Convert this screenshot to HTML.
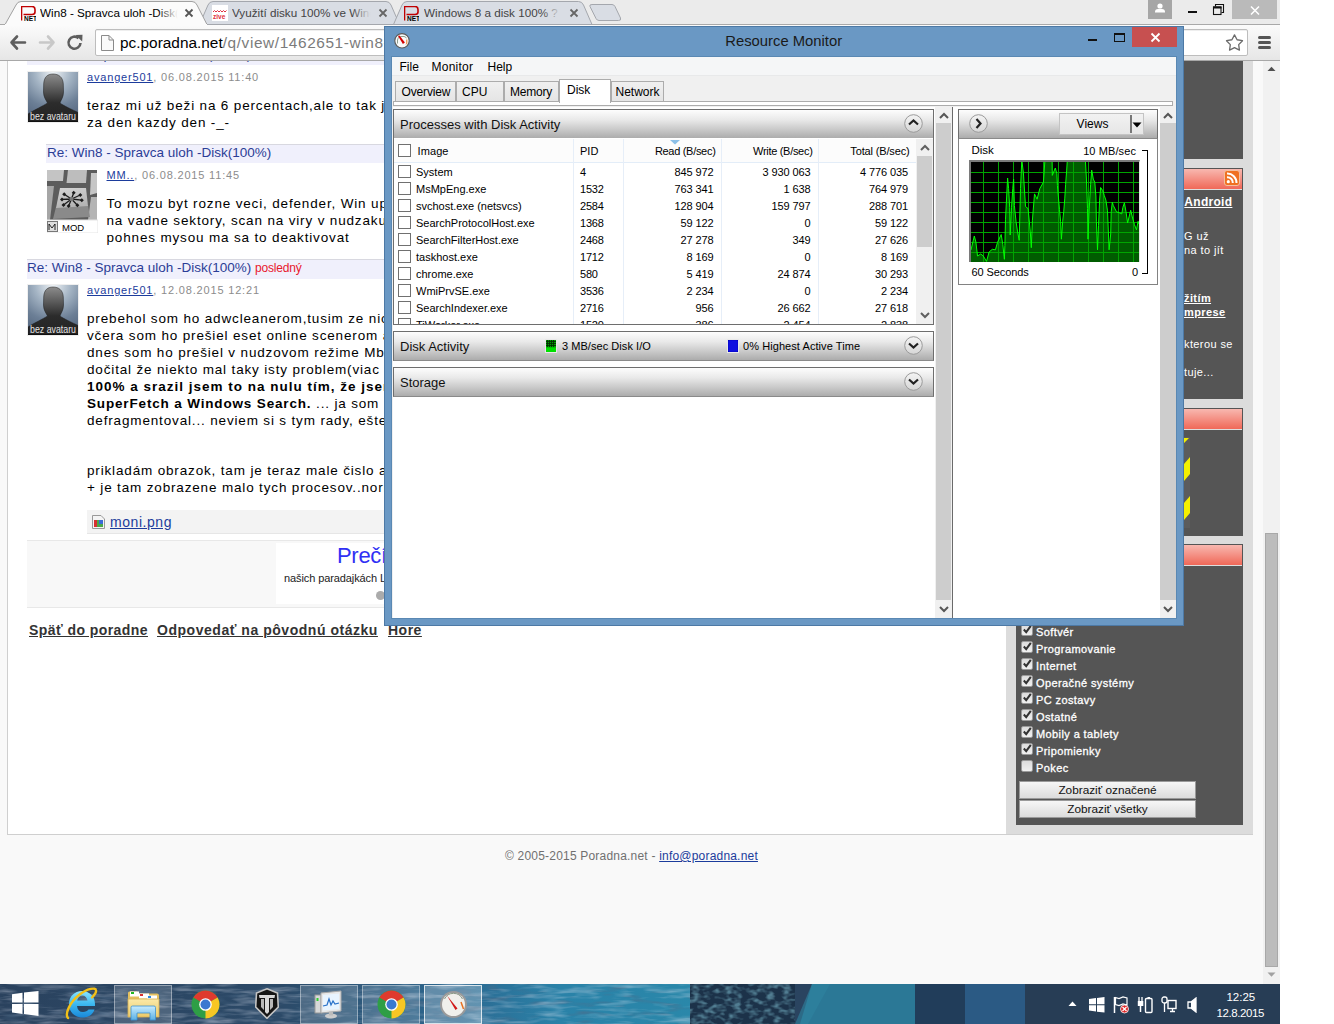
<!DOCTYPE html>
<html><head><meta charset="utf-8"><style>
html,body{margin:0;padding:0;background:#fff;}
body{width:1334px;height:1024px;position:relative;overflow:hidden;font-family:"Liberation Sans",sans-serif;}
div,svg{position:absolute;}
.t{position:absolute;}
.t{white-space:nowrap;line-height:1;}
a{color:inherit}
#scr{left:0;top:0;width:1280px;height:1024px;overflow:hidden;}
</style></head><body><div id="scr">
<div style="left:0px;top:0px;width:1280px;height:25px;background:#ebebeb"></div>
<svg style="position:absolute;left:0;top:0" width="1280" height="26">
<defs><linearGradient id="tg" x1="0" y1="0" x2="0" y2="1"><stop offset="0" stop-color="#fbfbfb"/><stop offset="1" stop-color="#fbfbfb"/></linearGradient></defs>
<line x1="0" y1="24.5" x2="1280" y2="24.5" stroke="#a9a9a9" stroke-width="1"/>
<path d="M399.5,24.5 L391,5 Q389.5,1.5 386,1.5 L213,1.5 Q209.5,1.5 208,5 L199.5,24.5 Z" fill="#d9dde4" stroke="#a4a7ad" stroke-width="1"/>
<path d="M592,24.5 L583.5,5 Q582,1.5 578.5,1.5 L407,1.5 Q403.5,1.5 402,5 L393.5,24.5 Z" fill="#d9dde4" stroke="#a4a7ad" stroke-width="1"/>
<path d="M207.5,25.5 L197,5 Q195.5,1.5 192,1.5 L21,1.5 Q17.5,1.5 16,5 L4.5,25.5 Z" fill="url(#tg)" stroke="#a0a0a0" stroke-width="1"/>
<rect x="5" y="24" width="202" height="2" fill="#fbfbfb"/>
<path d="M592,4.5 L612,4.5 Q614,4.5 615,6.5 L620.5,18 Q621.5,20.5 618.5,20.5 L599,20.5 Q597,20.5 596,18.5 L590,6.5 Q589,4.5 592,4.5 Z" fill="#d9dde4" stroke="#a4a7ad" stroke-width="1"/>
</svg>
<svg style="position:absolute;left:21px;top:6px" width="15" height="15" viewBox="0 0 15 15">
<path d="M0.5,14.5 V0.5 H11 Q14,0.5 14,3.5 V6 Q14,8.5 11,8.5 H2.5" fill="none" stroke="#c00000" stroke-width="1.6"/>
<text x="3" y="14.6" font-family="Liberation Sans" font-weight="bold" font-size="6.5" fill="#000">NET</text></svg>
<svg style="position:absolute;left:404px;top:6px" width="15" height="15" viewBox="0 0 15 15">
<path d="M0.5,14.5 V0.5 H11 Q14,0.5 14,3.5 V6 Q14,8.5 11,8.5 H2.5" fill="none" stroke="#c00000" stroke-width="1.6"/>
<text x="3" y="14.6" font-family="Liberation Sans" font-weight="bold" font-size="6.5" fill="#000">NET</text></svg>
<div style="left:212px;top:5px;width:16px;height:16px;background:#fff"></div>
<svg style="position:absolute;left:212px;top:5px" width="16" height="16">
<path d="M1,7 l1.5,-1.5 l1.5,1.5 l1.5,-1.5 l1.5,1.5 l1.5,-1.5 l1.5,1.5 l1.5,-1.5 l1.5,1.5 l1.5,-1.5" fill="none" stroke="#e03040" stroke-width="1"/>
<text x="1" y="14" font-family="Liberation Sans" font-weight="bold" font-size="6.5" fill="#e03040">zive</text></svg>
<div style="left:40px;top:0;width:140px;height:24px;overflow:hidden">
<span class="t" style="left:0px;top:7.10px;font-size:11.7px;color:#000;">Win8 - Spravca uloh -Disk(100%)</span>
<div style="left:118px;top:3px;width:22px;height:21px;background:linear-gradient(to right,rgba(251,251,251,0),#fbfbfb 90%)"></div>
</div>
<div style="left:232px;top:0;width:142px;height:24px;overflow:hidden">
<span class="t" style="left:0px;top:7.10px;font-size:11.7px;color:#444;">Využití disku 100% ve Windows 8</span>
<div style="left:120px;top:3px;width:22px;height:21px;background:linear-gradient(to right,rgba(217,221,228,0),#d9dde4 85%)"></div>
</div>
<div style="left:424px;top:0;width:140px;height:24px;overflow:hidden">
<span class="t" style="left:0px;top:7.10px;font-size:11.7px;color:#444;">Windows 8 a disk 100% ? | Poradna</span>
<div style="left:118px;top:3px;width:22px;height:21px;background:linear-gradient(to right,rgba(217,221,228,0),#d9dde4 85%)"></div>
</div>
<svg style="position:absolute;left:183.5px;top:8px" width="10" height="10"><path d="M1.5,1.5 L8.5,8.5 M8.5,1.5 L1.5,8.5" stroke="#555" stroke-width="1.8"/></svg>
<svg style="position:absolute;left:377.5px;top:8px" width="10" height="10"><path d="M1.5,1.5 L8.5,8.5 M8.5,1.5 L1.5,8.5" stroke="#666" stroke-width="1.8"/></svg>
<svg style="position:absolute;left:568.5px;top:8px" width="10" height="10"><path d="M1.5,1.5 L8.5,8.5 M8.5,1.5 L1.5,8.5" stroke="#666" stroke-width="1.8"/></svg>
<div style="left:1148px;top:0px;width:24px;height:19px;background:#a6a6a6"></div>
<svg style="position:absolute;left:1148px;top:0" width="24" height="19"><circle cx="12" cy="6" r="2.6" fill="#fff"/><path d="M7,12 Q7,9 10,9 H14 Q17,9 17,12 V12.5 H7 Z" fill="#fff"/></svg>
<div style="left:1188px;top:11px;width:9px;height:2px;background:#111"></div>
<svg style="position:absolute;left:1212px;top:3px" width="13" height="13"><rect x="1.5" y="4" width="7.5" height="7.5" fill="none" stroke="#111" stroke-width="1.1"/><rect x="1" y="3.5" width="8.5" height="2" fill="#111"/><path d="M3.5,3.5 V1.5 H11.5 V9.5 H9.5" fill="none" stroke="#111" stroke-width="1.1"/></svg>
<div style="left:1232px;top:0px;width:45px;height:19px;background:#bababa"></div>
<svg style="position:absolute;left:1250px;top:5.5px" width="10" height="9"><path d="M1,0.5 L9,8.5 M9,0.5 L1,8.5" stroke="#fff" stroke-width="1.5"/></svg>
<div style="left:0px;top:25px;width:1280px;height:35px;background:linear-gradient(#fbfbfb,#e6e6e6)"></div>
<div style="left:5px;top:25px;width:202px;height:1px;background:#fbfbfb"></div>
<div style="left:0px;top:60px;width:1280px;height:1px;background:#a8a8a8"></div>
<svg style="position:absolute;left:8px;top:33px" width="20" height="20"><path d="M9,3.5 L3.5,9.5 L9,15.5 M3.5,9.5 H17" fill="none" stroke="#5e5e5e" stroke-width="2.6" stroke-linecap="round" stroke-linejoin="round"/></svg>
<svg style="position:absolute;left:37px;top:33px" width="20" height="20"><path d="M11,3.5 L16.5,9.5 L11,15.5 M16.5,9.5 H3" fill="none" stroke="#c8c8c8" stroke-width="2.6" stroke-linecap="round" stroke-linejoin="round"/></svg>
<svg style="position:absolute;left:65px;top:33px" width="20" height="20"><path d="M15.5,10 A6,6 0 1 1 13.5,5.2" fill="none" stroke="#5e5e5e" stroke-width="2.6"/><path d="M10.5,2 L17.5,1.8 L17.2,8.5 Z" fill="#5e5e5e"/></svg>
<div style="left:95px;top:29px;width:1153px;height:27px;background:#fff;border:1px solid #bdbdbd;border-radius:2px;box-sizing:border-box;box-shadow:inset 0 1px 0 #eee"></div>
<svg style="position:absolute;left:101px;top:35px" width="13" height="16"><path d="M0.5,0.5 H8 L12.5,5 V15.5 H0.5 Z" fill="#fafafa" stroke="#8a8a8a"/><path d="M8,0.5 V5 H12.5" fill="none" stroke="#8a8a8a"/></svg>
<span class="t" style="left:120px;top:34.96px;font-size:15.4px;color:#000;">pc.poradna.net<span style="color:#7b7b7b;letter-spacing:0.6px">/q/view/1462651-win8-spravca-uloh-disk-100</span></span>
<svg style="position:absolute;left:1225px;top:33px" width="20" height="20"><path d="M9.50,1.90 L12.09,6.74 L17.49,7.70 L13.68,11.66 L14.44,17.10 L9.50,14.70 L4.56,17.10 L5.32,11.66 L1.51,7.70 L6.91,6.74 Z" fill="#fff" stroke="#6a6a6a" stroke-width="1.3" stroke-linejoin="round"/></svg>
<div style="left:1258px;top:36px;width:13px;height:3px;background:#555;border-radius:1.5px"></div>
<div style="left:1258px;top:41px;width:13px;height:3px;background:#555;border-radius:1.5px"></div>
<div style="left:1258px;top:46px;width:13px;height:3px;background:#555;border-radius:1.5px"></div>
<div style="left:0px;top:61px;width:1263px;height:923px;background:#f9f9f9"></div>
<div style="left:7px;top:61px;width:1px;height:774px;background:#cfcfcf"></div>
<div style="left:8px;top:61px;width:998px;height:773px;background:#fff"></div>
<div style="left:7px;top:834px;width:1246px;height:1px;background:#cfcfcf"></div>
<div style="left:1006px;top:61px;width:247px;height:773px;background:#dcdcdc"></div>
<div style="left:1016px;top:61px;width:227px;height:98px;background:#555"></div>
<div style="left:1016px;top:168px;width:227px;height:231px;background:#555"></div>
<div style="left:1016px;top:168px;width:227px;height:22px;background:#555"></div>
<div style="left:1017px;top:169px;width:225px;height:20px;background:linear-gradient(#f8b8b0,#f06858)"></div>
<div style="left:1017px;top:189px;width:225px;height:1px;background:#ddd"></div>
<div style="left:1016px;top:408px;width:227px;height:128px;background:#555"></div>
<div style="left:1016px;top:408px;width:227px;height:22px;background:#555"></div>
<div style="left:1017px;top:409px;width:225px;height:20px;background:linear-gradient(#f8b8b0,#f06858)"></div>
<div style="left:1017px;top:429px;width:225px;height:1px;background:#ddd"></div>
<div style="left:1016px;top:544px;width:227px;height:281px;background:#555"></div>
<div style="left:1016px;top:544px;width:227px;height:22px;background:#555"></div>
<div style="left:1017px;top:545px;width:225px;height:20px;background:linear-gradient(#f8b8b0,#f06858)"></div>
<div style="left:1017px;top:565px;width:225px;height:1px;background:#ddd"></div>
<svg style="position:absolute;left:1224px;top:170px" width="16" height="16"><rect x="0.5" y="0.5" width="15" height="15" rx="2.5" fill="#f07020" stroke="#f4c0a0"/>
<circle cx="4.3" cy="11.7" r="1.6" fill="#fff"/><path d="M3,7.2 A5.5,5.5 0 0 1 8.8,13 M3,3.5 A9.2,9.2 0 0 1 12.5,13" fill="none" stroke="#fff" stroke-width="2"/></svg>
<span class="t" style="left:1184.3px;top:195.84px;font-size:12px;color:#fff;font-weight:bold;letter-spacing:0.3px;text-decoration:underline"> Android</span>
<span class="t" style="left:1184px;top:231.19px;font-size:11px;color:#fff;letter-spacing:0.4px;">G už</span>
<span class="t" style="left:1184px;top:245.19px;font-size:11px;color:#fff;letter-spacing:0.4px;">na to jít</span>
<span class="t" style="left:1184px;top:292.69px;font-size:11px;color:#fff;font-weight:bold;letter-spacing:0.4px;text-decoration:underline">žitím</span>
<span class="t" style="left:1184px;top:306.69px;font-size:11px;color:#fff;font-weight:bold;letter-spacing:0.4px;text-decoration:underline">mprese</span>
<span class="t" style="left:1184px;top:339.19px;font-size:11px;color:#fff;letter-spacing:0.4px;">kterou se</span>
<span class="t" style="left:1184px;top:367.19px;font-size:11px;color:#fff;letter-spacing:0.4px;">tuje...</span>
<svg style="position:absolute;left:1184px;top:437px" width="6" height="91"><rect width="6" height="91" fill="#5c5c5c"/>
<path d="M0,1 H5 L0,6 Z M0,27 L6,20 V37 L0,44 Z M0,66 L6,59 V76 L0,83 Z" fill="#f4f000"/></svg>
<div style="left:1021px;top:624px;width:12px;height:12px;background:linear-gradient(#dcdcdc,#f0f0f0);border:1px solid #9a9a9a;border-radius:2px;box-sizing:border-box"></div>
<svg style="position:absolute;left:1021px;top:623px" width="12" height="12"><path d="M2.8,6.5 L5.2,9.2 L9.8,2.8" fill="none" stroke="#333" stroke-width="2"/></svg>
<span class="t" style="left:1036px;top:626.69px;font-size:11px;color:#fff;letter-spacing:0.4px;-webkit-text-stroke:0.3px #fff">Softvér</span>
<div style="left:1021px;top:641px;width:12px;height:12px;background:linear-gradient(#dcdcdc,#f0f0f0);border:1px solid #9a9a9a;border-radius:2px;box-sizing:border-box"></div>
<svg style="position:absolute;left:1021px;top:640px" width="12" height="12"><path d="M2.8,6.5 L5.2,9.2 L9.8,2.8" fill="none" stroke="#333" stroke-width="2"/></svg>
<span class="t" style="left:1036px;top:643.69px;font-size:11px;color:#fff;letter-spacing:0.4px;-webkit-text-stroke:0.3px #fff">Programovanie</span>
<div style="left:1021px;top:658px;width:12px;height:12px;background:linear-gradient(#dcdcdc,#f0f0f0);border:1px solid #9a9a9a;border-radius:2px;box-sizing:border-box"></div>
<svg style="position:absolute;left:1021px;top:657px" width="12" height="12"><path d="M2.8,6.5 L5.2,9.2 L9.8,2.8" fill="none" stroke="#333" stroke-width="2"/></svg>
<span class="t" style="left:1036px;top:660.69px;font-size:11px;color:#fff;letter-spacing:0.4px;-webkit-text-stroke:0.3px #fff">Internet</span>
<div style="left:1021px;top:675px;width:12px;height:12px;background:linear-gradient(#dcdcdc,#f0f0f0);border:1px solid #9a9a9a;border-radius:2px;box-sizing:border-box"></div>
<svg style="position:absolute;left:1021px;top:674px" width="12" height="12"><path d="M2.8,6.5 L5.2,9.2 L9.8,2.8" fill="none" stroke="#333" stroke-width="2"/></svg>
<span class="t" style="left:1036px;top:677.69px;font-size:11px;color:#fff;letter-spacing:0.4px;-webkit-text-stroke:0.3px #fff">Operačné systémy</span>
<div style="left:1021px;top:692px;width:12px;height:12px;background:linear-gradient(#dcdcdc,#f0f0f0);border:1px solid #9a9a9a;border-radius:2px;box-sizing:border-box"></div>
<svg style="position:absolute;left:1021px;top:691px" width="12" height="12"><path d="M2.8,6.5 L5.2,9.2 L9.8,2.8" fill="none" stroke="#333" stroke-width="2"/></svg>
<span class="t" style="left:1036px;top:694.69px;font-size:11px;color:#fff;letter-spacing:0.4px;-webkit-text-stroke:0.3px #fff">PC zostavy</span>
<div style="left:1021px;top:709px;width:12px;height:12px;background:linear-gradient(#dcdcdc,#f0f0f0);border:1px solid #9a9a9a;border-radius:2px;box-sizing:border-box"></div>
<svg style="position:absolute;left:1021px;top:708px" width="12" height="12"><path d="M2.8,6.5 L5.2,9.2 L9.8,2.8" fill="none" stroke="#333" stroke-width="2"/></svg>
<span class="t" style="left:1036px;top:711.69px;font-size:11px;color:#fff;letter-spacing:0.4px;-webkit-text-stroke:0.3px #fff">Ostatné</span>
<div style="left:1021px;top:726px;width:12px;height:12px;background:linear-gradient(#dcdcdc,#f0f0f0);border:1px solid #9a9a9a;border-radius:2px;box-sizing:border-box"></div>
<svg style="position:absolute;left:1021px;top:725px" width="12" height="12"><path d="M2.8,6.5 L5.2,9.2 L9.8,2.8" fill="none" stroke="#333" stroke-width="2"/></svg>
<span class="t" style="left:1036px;top:728.69px;font-size:11px;color:#fff;letter-spacing:0.4px;-webkit-text-stroke:0.3px #fff">Mobily a tablety</span>
<div style="left:1021px;top:743px;width:12px;height:12px;background:linear-gradient(#dcdcdc,#f0f0f0);border:1px solid #9a9a9a;border-radius:2px;box-sizing:border-box"></div>
<svg style="position:absolute;left:1021px;top:742px" width="12" height="12"><path d="M2.8,6.5 L5.2,9.2 L9.8,2.8" fill="none" stroke="#333" stroke-width="2"/></svg>
<span class="t" style="left:1036px;top:745.69px;font-size:11px;color:#fff;letter-spacing:0.4px;-webkit-text-stroke:0.3px #fff">Pripomienky</span>
<div style="left:1021px;top:760px;width:12px;height:12px;background:linear-gradient(#dcdcdc,#f0f0f0);border:1px solid #9a9a9a;border-radius:2px;box-sizing:border-box"></div>
<span class="t" style="left:1036px;top:762.69px;font-size:11px;color:#fff;letter-spacing:0.4px;-webkit-text-stroke:0.3px #fff">Pokec</span>
<div style="left:1019px;top:781px;width:177px;height:18px;background:linear-gradient(#f6f6f6,#dcdcdc);border:1px solid #9a9a9a;box-sizing:border-box"></div>
<span class="t" style="left:957.5px;top:784.51px;font-size:11.8px;color:#111;text-align:center;width:300px;">Zobraziť označené</span>
<div style="left:1019px;top:800px;width:177px;height:18px;background:linear-gradient(#f6f6f6,#dcdcdc);border:1px solid #9a9a9a;box-sizing:border-box"></div>
<span class="t" style="left:957.5px;top:803.51px;font-size:11.8px;color:#111;text-align:center;width:300px;">Zobraziť všetky</span>
<div style="left:1263px;top:61px;width:17px;height:923px;background:#f1f1f1"></div>
<div style="left:1265px;top:533px;width:13px;height:434px;background:#bcbcbc;border:1px solid #a8a8a8;box-sizing:border-box"></div>
<svg style="position:absolute;left:1267px;top:66px" width="9" height="6"><path d="M0.5,5 L4.5,0.8 L8.5,5 Z" fill="#505050"/></svg>
<svg style="position:absolute;left:1267px;top:972px" width="9" height="6"><path d="M0.5,0.5 L4.5,4.7 L8.5,0.5 Z" fill="#a0a0a0"/></svg>
<div style="left:8px;top:61px;width:998px;height:4px;overflow:hidden">
<div style="left:19px;top:-15px;width:979px;height:19px;background:#f0f0fc"></div>
<span class="t" style="left:19px;top:-13.43px;font-size:13.5px;color:#2b3d96;">Re: Win8 - Spravca uloh -Disk(100%)</span>
</div>
<div style="left:27px;top:71px;width:52px;height:52px;background:#efefef"></div>
<svg style="position:absolute;left:28px;top:72px" width="50" height="50" viewBox="0 0 50 50">
<defs><radialGradient id="ag2872" cx="0.5" cy="0.0" r="0.95"><stop offset="0" stop-color="#eef2f5"/><stop offset="0.38" stop-color="#a4b4c4"/><stop offset="0.75" stop-color="#6c7f96"/><stop offset="1" stop-color="#5a6c84"/></radialGradient>
<linearGradient id="hg2872" x1="0" y1="0" x2="0" y2="1"><stop offset="0" stop-color="#8c8c8c"/><stop offset="0.6" stop-color="#2c2c2c"/><stop offset="1" stop-color="#222"/></linearGradient></defs>
<rect width="50" height="50" fill="url(#ag2872)"/>
<path d="M25,2 C30.5,2 35,5 35.3,12 L35.5,20 C35.5,25 33,28 32,31 C36,34 44,37.5 50,40.5 V50 H0 V42 C6,38 15,34 19.5,31 C18,28 15.5,25 15.5,20 L15.7,12 C16,5 19.5,2 25,2 Z" fill="url(#hg2872)" stroke="#1a1a1a" stroke-width="0.5"/>
<rect y="49" width="50" height="1" fill="#111"/>
<text x="2" y="48" font-family="Liberation Sans" font-size="10" fill="#e4e4e4" textLength="46" lengthAdjust="spacingAndGlyphs">bez avataru</text></svg>
<span class="t" style="left:87px;top:71.69px;font-size:11px;color:#8c8c8c;letter-spacing:0.82px;"><a style="color:#1c3c9c;text-decoration:underline">avanger501</a>, <span style="color:#8c8c8c">06.08.2015 11:40</span></span>
<span class="t" style="left:87px;top:98.57px;font-size:13.5px;color:#000;letter-spacing:0.84px;">teraz mi už beži na 6 percentach,ale to tak je stale a zase sa to vrati</span>
<span class="t" style="left:87px;top:115.57px;font-size:13.5px;color:#000;letter-spacing:0.84px;">za den kazdy den -_-</span>
<div style="left:46px;top:144px;width:960px;height:1px;background:#d8d8e0"></div>
<div style="left:46px;top:145px;width:960px;height:18px;background:#f0f0fc"></div>
<span class="t" style="left:47px;top:146.07px;font-size:13.5px;color:#2b3d96;">Re: Win8 - Spravca uloh -Disk(100%)</span>
<svg style="position:absolute;left:47px;top:170px" width="51" height="63" viewBox="0 0 51 63">
<defs><linearGradient id="kf" x1="0" y1="0" x2="0.3" y2="1"><stop offset="0" stop-color="#d4d4d4"/><stop offset="1" stop-color="#b4b4b4"/></linearGradient></defs>
<rect x="0" y="0" width="50" height="50" fill="#5c5c5c"/>
<path d="M0,0 H17 L16,11 H0 Z" fill="#c4c4c4"/>
<path d="M21,0 H40 L39,13 H19.5 Z" fill="#bdbdbd"/>
<path d="M44,3 H50 V23 L43,25 Z" fill="#c6c6c6"/>
<path d="M0,16 H7 L3,50 H0 Z" fill="#a6a6a6"/>
<path d="M44,27 H50 V50 H41 Z" fill="#b4b4b4"/>
<path d="M9,37 L41,35 L43,47 L6,49 Z" fill="#8a8a8a"/>
<path d="M13,18 H39 L41,36 L9,38 Z" fill="url(#kf)"/>
<g stroke="#1c1c1c" stroke-width="1.3" fill="none"><path d="M24.5,29 L17.2,24.3 M24.5,29 L26.7,22.8 M24.5,29 L33.3,25 M24.5,29 L34.8,30.2 M24.5,29 L30.4,35.3 M24.5,29 L21.6,36 M24.5,29 L16.5,34.9 M24.5,29 L15,29.4"/></g>
<g fill="#1c1c1c"><path d="M17.2,22.3 l2,2 l-2,2 l-2,-2z M26.7,20.8 l2,2 l-2,2 l-2,-2z M33.3,23 l2,2 l-2,2 l-2,-2z M34.8,28.2 l2,2 l-2,2 l-2,-2z M30.4,33.3 l2,2 l-2,2 l-2,-2z M21.6,34 l2,2 l-2,2 l-2,-2z M16.5,32.9 l2,2 l-2,2 l-2,-2z M15,27.4 l2,2 l-2,2 l-2,-2z"/><circle cx="24.5" cy="29" r="2.2" fill="#777"/></g>
<rect x="0" y="50" width="51" height="13" fill="#fff" stroke="#e4e4e4"/>
<rect x="0.5" y="51.5" width="10" height="10" fill="#ddd" stroke="#777"/><path d="M2,60 V54 L5,58 L8,54 V60" fill="none" stroke="#111" stroke-width="0.9"/>
<text x="15" y="60.5" font-family="Liberation Sans" font-size="9.5" fill="#000">MOD</text></svg>
<span class="t" style="left:106.5px;top:169.69px;font-size:11px;color:#8c8c8c;letter-spacing:0.82px;"><a style="color:#1c3c9c;text-decoration:underline">MM..</a>, <span style="color:#8c8c8c">06.08.2015 11:45</span></span>
<span class="t" style="left:106.5px;top:196.57px;font-size:13.5px;color:#000;letter-spacing:0.84px;">To mozu byt rozne veci, defender, Win update, indexacia, kontrola disku</span>
<span class="t" style="left:106.5px;top:213.57px;font-size:13.5px;color:#000;letter-spacing:0.84px;">na vadne sektory, scan na viry v nudzakuoch ...</span>
<span class="t" style="left:106.5px;top:230.57px;font-size:13.5px;color:#000;letter-spacing:0.84px;">pohnes mysou ma sa to deaktivovat</span>
<div style="left:27px;top:259px;width:979px;height:1px;background:#d8d8e0"></div>
<div style="left:27px;top:260px;width:979px;height:19px;background:#f0f0fc"></div>
<span class="t" style="left:27px;top:261.07px;font-size:13.5px;color:#2b3d96;">Re: Win8 - Spravca uloh -Disk(100%) <span style="color:#e8182c;font-size:12px;letter-spacing:-0.2px">posledný</span></span>
<div style="left:27px;top:284px;width:52px;height:52px;background:#efefef"></div>
<svg style="position:absolute;left:28px;top:285px" width="50" height="50" viewBox="0 0 50 50">
<defs><radialGradient id="ag28285" cx="0.5" cy="0.0" r="0.95"><stop offset="0" stop-color="#eef2f5"/><stop offset="0.38" stop-color="#a4b4c4"/><stop offset="0.75" stop-color="#6c7f96"/><stop offset="1" stop-color="#5a6c84"/></radialGradient>
<linearGradient id="hg28285" x1="0" y1="0" x2="0" y2="1"><stop offset="0" stop-color="#8c8c8c"/><stop offset="0.6" stop-color="#2c2c2c"/><stop offset="1" stop-color="#222"/></linearGradient></defs>
<rect width="50" height="50" fill="url(#ag28285)"/>
<path d="M25,2 C30.5,2 35,5 35.3,12 L35.5,20 C35.5,25 33,28 32,31 C36,34 44,37.5 50,40.5 V50 H0 V42 C6,38 15,34 19.5,31 C18,28 15.5,25 15.5,20 L15.7,12 C16,5 19.5,2 25,2 Z" fill="url(#hg28285)" stroke="#1a1a1a" stroke-width="0.5"/>
<rect y="49" width="50" height="1" fill="#111"/>
<text x="2" y="48" font-family="Liberation Sans" font-size="10" fill="#e4e4e4" textLength="46" lengthAdjust="spacingAndGlyphs">bez avataru</text></svg>
<span class="t" style="left:87px;top:284.69px;font-size:11px;color:#8c8c8c;letter-spacing:0.82px;"><a style="color:#1c3c9c;text-decoration:underline">avanger501</a>, <span style="color:#8c8c8c">12.08.2015 12:21</span></span>
<span class="t" style="left:87px;top:311.57px;font-size:13.5px;color:#000;letter-spacing:0.84px;">prebehol som ho adwcleanerom,tusim ze nic nenaslo</span>
<span class="t" style="left:87px;top:328.57px;font-size:13.5px;color:#000;letter-spacing:0.84px;">včera som ho prešiel eset online scenerom a nic</span>
<span class="t" style="left:87px;top:345.57px;font-size:13.5px;color:#000;letter-spacing:0.84px;">dnes som ho prešiel v nudzovom režime Mbam, na jednom fore som sa</span>
<span class="t" style="left:87px;top:362.57px;font-size:13.5px;color:#000;letter-spacing:0.84px;">dočital že niekto mal taky isty problem(viac ako mesiac.. disk stale na</span>
<span class="t" style="left:87px;top:379.57px;font-size:13.5px;color:#000;letter-spacing:0.84px;"><b style="letter-spacing:1.0px">100% a srazil jsem to na nulu tím, že jsem vypnul dve sluzby</b></span>
<span class="t" style="left:87px;top:396.57px;font-size:13.5px;color:#000;letter-spacing:0.84px;"><b>SuperFetch a Windows Search.</b> ... ja som ich vypol ...</span>
<span class="t" style="left:87px;top:413.57px;font-size:13.5px;color:#000;letter-spacing:0.84px;">defragmentoval... neviem si s tym rady, ešte skusim ...</span>
<span class="t" style="left:87px;top:464.07px;font-size:13.5px;color:#000;letter-spacing:0.84px;">prikladám obrazok, tam je teraz male čislo a ...</span>
<span class="t" style="left:87px;top:481.07px;font-size:13.5px;color:#000;letter-spacing:0.84px;">+ je tam zobrazene malo tych procesov..normalne</span>
<div style="left:87px;top:510px;width:919px;height:24px;background:#f3f3f3;border-bottom:1px solid #e6e6e6;box-sizing:border-box"></div>
<svg style="position:absolute;left:92px;top:515px" width="13" height="14"><path d="M0.5,0.5 H9 L12.5,4 V13.5 H0.5 Z" fill="#f4f4f4" stroke="#999"/><rect x="2" y="5" width="9" height="7" fill="#4aa84a"/><path d="M2,5 h3 v7 h-3z" fill="#d83030"/><path d="M7,5 h4 v4 h-4z" fill="#3a6ad8"/></svg>
<span class="t" style="left:110px;top:514.65px;font-size:14px;color:#1c3c9c;letter-spacing:0.55px;"><a style="color:#1c3c9c;text-decoration:underline">moni.png</a></span>
<div style="left:27px;top:540px;width:979px;height:1px;background:#e8e8e8"></div>
<div style="left:27px;top:541px;width:979px;height:66px;background:#f8f8f8"></div>
<div style="left:27px;top:607px;width:979px;height:1px;background:#e8e8e8"></div>
<div style="left:276px;top:543px;width:500px;height:61px;background:#fff"></div>
<span class="t" style="left:337px;top:545.38px;font-size:22px;color:#3030f4;letter-spacing:-0.3px;">Prečítajte si</span>
<span class="t" style="left:284px;top:573.49px;font-size:11px;color:#222;letter-spacing:-0.1px;">našich paradajkách Lorem ipsum</span>
<div style="left:376px;top:591px;width:9px;height:9px;border-radius:50%;background:#ababab"></div>
<span class="t" style="left:29px;top:622.85px;font-size:14px;color:#333;font-weight:bold;letter-spacing:0.43px;"><u>Späť do poradne</u></span>
<span class="t" style="left:157px;top:622.85px;font-size:14px;color:#333;font-weight:bold;letter-spacing:0.53px;"><u>Odpovedať na pôvodnú otázku</u></span>
<span class="t" style="left:388px;top:622.85px;font-size:14px;color:#333;font-weight:bold;letter-spacing:0.5px;"><u>Hore</u></span>
<span class="t" style="left:505px;top:849.84px;font-size:12px;color:#707070;letter-spacing:0.2px;">© 2005-2015 Poradna.net - <a style="color:#1c3c9c;text-decoration:underline">info@poradna.net</a></span>
<div style="left:0;top:984px;width:1280px;height:40px;overflow:hidden;background:#2a4460">
<svg width="1280" height="40" style="position:absolute;left:0;top:0">
<defs>
<linearGradient id="tbg" x1="0" y1="0" x2="700" y2="0" gradientUnits="userSpaceOnUse">
<stop offset="0" stop-color="#2a425e"/><stop offset="0.4" stop-color="#2c4a68"/><stop offset="0.65" stop-color="#2c6890"/><stop offset="0.8" stop-color="#2a82a8"/><stop offset="1" stop-color="#2a88aa"/></linearGradient>
<filter id="wv" x="0" y="0" width="100%" height="100%">
<feTurbulence type="fractalNoise" baseFrequency="0.03 0.2" numOctaves="3" seed="7"/>
<feColorMatrix type="matrix" values="0 0 0 0 0.72  0 0 0 0 0.76  0 0 0 0 0.86  0 0 0 2.4 -1.1"/>
</filter>
<filter id="wd" x="0" y="0" width="100%" height="100%">
<feTurbulence type="fractalNoise" baseFrequency="0.035 0.18" numOctaves="2" seed="3"/>
<feColorMatrix type="matrix" values="0 0 0 0 0.08  0 0 0 0 0.15  0 0 0 0 0.25  0 0 0 -2.2 1.0"/>
</filter>
<filter id="fol" x="0" y="0" width="100%" height="100%">
<feTurbulence type="fractalNoise" baseFrequency="0.12 0.2" numOctaves="2" seed="11"/>
<feColorMatrix type="matrix" values="0 0 0 0 0.24  0 0 0 0 0.58  0 0 0 0 0.70  0 0 0 3 -1.3"/>
</filter>
</defs>
<rect width="700" height="40" fill="url(#tbg)"/>
<rect width="700" height="40" filter="url(#wd)" opacity="0.85"/>
<rect width="700" height="40" filter="url(#wv)" opacity="0.4"/>
<rect x="690" width="105" height="40" fill="#1c3249"/>
<rect x="690" width="105" height="40" filter="url(#fol)" opacity="0.5"/>
<path d="M800,40 L812,0 H915 V40 Z" fill="#2b7896"/>
<path d="M795,40 L812,0 H830 L808,40 Z" fill="#2f83a0" opacity="0.6"/>
<rect x="915" width="50" height="40" fill="#213d5a"/>
<rect x="965" width="60" height="40" fill="#2b5a84"/>
<rect x="1025" width="255" height="40" fill="#273d55"/>
</svg></div>
<svg style="position:absolute;left:12px;top:991px" width="27" height="25"><path d="M0,3.3 L10.5,1.8 V11.6 H0 Z M12,1.6 L26.5,0 V11.6 H12 Z M0,13 H10.5 V22.9 L0,21.5 Z M12,13 H26.5 V25 L12,23.1 Z" fill="#fff"/></svg>
<svg style="position:absolute;left:64px;top:987px" width="34" height="34" viewBox="0 0 34 34">
<defs><linearGradient id="ieg" x1="0" y1="0" x2="0" y2="1"><stop offset="0" stop-color="#8ae4ff"/><stop offset="0.5" stop-color="#3cb8f0"/><stop offset="1" stop-color="#1a88d8"/></linearGradient></defs>
<path d="M5,17 C5,9.5 10.5,4 18,4 C25.5,4 31,9.5 31,17 V19 H13 C13.5,23 15.5,25 19,25 C21.5,25 23.5,24 24.5,22.5 H30.5 C29,27.5 24.5,30.5 18.5,30.5 C10.5,30.5 5,25 5,17 Z M13.2,13.5 H23.5 C23,10.5 21,8.5 18.3,8.5 C15.6,8.5 13.8,10.5 13.2,13.5 Z" fill="url(#ieg)"/>
<path d="M4,31 C0.5,27 6,15 15,8 C24,1 31.5,0.5 32,3 C32.5,5 30.5,8 28,10.5" fill="none" stroke="#f2c018" stroke-width="2.4" stroke-linecap="round"/>
</svg>
<div style="left:114px;top:985px;width:58px;height:39px;background:rgba(255,255,255,0.16);border:1px solid rgba(255,255,255,0.4);box-sizing:border-box"></div>
<div style="left:300px;top:985px;width:58px;height:39px;background:rgba(255,255,255,0.16);border:1px solid rgba(255,255,255,0.4);box-sizing:border-box"></div>
<div style="left:362px;top:985px;width:58px;height:39px;background:rgba(255,255,255,0.16);border:1px solid rgba(255,255,255,0.4);box-sizing:border-box"></div>
<div style="left:424px;top:985px;width:58px;height:39px;background:rgba(255,255,255,0.26);border:1px solid rgba(255,255,255,0.75);box-sizing:border-box"></div>
<svg style="position:absolute;left:127px;top:990px" width="33" height="31" viewBox="0 0 33 31">
<defs><linearGradient id="fdg" x1="0" y1="0" x2="0" y2="1"><stop offset="0" stop-color="#fbe9a8"/><stop offset="1" stop-color="#eccb6a"/></linearGradient>
<linearGradient id="gl" x1="0" y1="0" x2="0" y2="1"><stop offset="0" stop-color="#c8ecff"/><stop offset="1" stop-color="#5ab0e4"/></linearGradient></defs>
<path d="M1,3 Q1,1.5 2.5,1.5 H10 L12,3.5 H30 Q32,3.5 32,5.5 V26 H1 Z" fill="#e4c060"/>
<rect x="3" y="1.5" width="9" height="5" fill="#fff"/><rect x="4" y="2" width="3" height="2" fill="#22b822"/>
<rect x="12" y="3.5" width="10" height="5" fill="#fff"/><rect x="13" y="4" width="3" height="2" fill="#d83030"/>
<rect x="20" y="5.5" width="10" height="5" fill="#fff"/><rect x="21" y="6" width="3" height="2" fill="#2a88e0"/>
<path d="M1,9 H32 V27 H1 Z" fill="url(#fdg)" stroke="#d8b050" stroke-width="0.8"/>
<path d="M4,30 V17.5 Q4,16 5.5,16 H27 Q28.5,16 28.5,17.5 V30 H23 V23 H10 V30 Z" fill="url(#gl)" stroke="#3a90d0" stroke-width="0.8"/>
</svg>
<svg style="position:absolute;left:191px;top:990px" width="29" height="29" viewBox="0 0 29 29">
<circle cx="14.5" cy="14.5" r="14" fill="#2e9e46"/>
<path d="M14.5,14.5 L2.4,7.5 A14,14 0 0 1 26.6,7.5 Z" fill="#df3a2e"/>
<path d="M14.5,14.5 L26.6,7.5 A14,14 0 0 1 14.5,28.5 Z" fill="#f7c624"/>
<circle cx="14.5" cy="14.5" r="6.3" fill="#fff"/><circle cx="14.5" cy="14.5" r="5" fill="#3a78d0"/></svg>
<svg style="position:absolute;left:377px;top:990px" width="29" height="29" viewBox="0 0 29 29">
<circle cx="14.5" cy="14.5" r="14" fill="#2e9e46"/>
<path d="M14.5,14.5 L2.4,7.5 A14,14 0 0 1 26.6,7.5 Z" fill="#df3a2e"/>
<path d="M14.5,14.5 L26.6,7.5 A14,14 0 0 1 14.5,28.5 Z" fill="#f7c624"/>
<circle cx="14.5" cy="14.5" r="6.3" fill="#fff"/><circle cx="14.5" cy="14.5" r="5" fill="#3a78d0"/></svg>
<svg style="position:absolute;left:255px;top:988px" width="24" height="31" viewBox="0 0 24 31">
<path d="M12,0.8 L22.5,5 L23.3,19 L12,30.3 L0.7,19 L1.5,5 Z" fill="#151515" stroke="#c4c4c4" stroke-width="1.6"/>
<path d="M4,7 H20 L19.5,10 H14 V24 L12,26 L10,24 V10 H4.5 Z" fill="#d8d8d8"/>
<path d="M6,11 V19 L9,22 V11 Z M18,11 V19 L15,22 V11 Z" fill="#b8b8b8"/></svg>
<svg style="position:absolute;left:314px;top:990px" width="30" height="30" viewBox="0 0 30 30">
<rect x="1" y="5" width="6" height="18" fill="#d8d8d8" stroke="#999"/><rect x="2.5" y="8" width="2" height="3" fill="#3c3"/>
<path d="M7,3 L27,1 V21 L7,23 Z" fill="#e8e8e8" stroke="#aaa"/><path d="M9,5 L25,3.5 V19 L9,20.5 Z" fill="#e8f4ff"/>
<path d="M9,16 L13,15 L15,9 L17,15 L19,11 L21,14 L25,13" fill="none" stroke="#2870c8" stroke-width="1.2"/>
<ellipse cx="17" cy="26" rx="6" ry="2.5" fill="#ccc"/><rect x="15" y="21.5" width="4" height="4" fill="#bbb"/></svg>
<svg style="position:absolute;left:439px;top:990px" width="29" height="29" viewBox="0 0 29 29">
<circle cx="14.5" cy="14.5" r="13.5" fill="#9a9a9a"/><circle cx="14.5" cy="14.5" r="11.5" fill="#f0f0ec"/>
<path d="M5.5,9 A10,10 0 0 1 23.5,9" fill="none" stroke="#8a9a8a" stroke-width="1"/>
<path d="M22,12 L24.5,19" stroke="#e87020" stroke-width="1.5"/>
<path d="M8,5.5 L18.5,18.5 L16.5,20 Z" fill="#d01818"/></svg>
<svg style="position:absolute;left:1068px;top:1001px" width="9" height="6"><path d="M0.5,5 L4.5,0.5 L8.5,5 Z" fill="#fff"/></svg>
<svg style="position:absolute;left:1089px;top:997px" width="16" height="16"><path d="M0,2 L7,1 V7.3 H0 Z M8,0.9 L15.5,0 V7.3 H8 Z M0,8.3 H7 V14.6 L0,13.6 Z M8,8.3 H15.5 V15.6 L8,14.7 Z" fill="#fff"/></svg>
<svg style="position:absolute;left:1113px;top:996px" width="17" height="18"><path d="M1.5,1 V17" stroke="#fff" stroke-width="1.5"/><path d="M2.5,1.5 L6,2.5 L10,1 L14,2 V9 L10,8 L6,9.5 L2.5,8.5 Z" fill="none" stroke="#fff" stroke-width="1.2"/><circle cx="11.5" cy="13" r="4" fill="#e02424" stroke="#fff" stroke-width="0.8"/><path d="M9.5,11 L13.5,15 M13.5,11 L9.5,15" stroke="#fff" stroke-width="1.2"/></svg>
<svg style="position:absolute;left:1137px;top:996px" width="16" height="18"><path d="M2,1 V5 M5,1 V5" stroke="#fff" stroke-width="1.3"/><rect x="0.8" y="5" width="5.5" height="5" fill="#fff"/><path d="M3.5,10 V16" stroke="#fff" stroke-width="1.5"/><rect x="8.5" y="2.5" width="6.5" height="14" rx="1" fill="none" stroke="#fff" stroke-width="1.4"/><rect x="10.5" y="1" width="2.5" height="1.5" fill="#fff"/></svg>
<svg style="position:absolute;left:1161px;top:996px" width="16" height="18"><rect x="1" y="1" width="5" height="6" rx="2" fill="none" stroke="#fff" stroke-width="1.3"/><path d="M3.5,7 V16" stroke="#fff" stroke-width="1.3"/><rect x="7" y="4.5" width="8" height="8" fill="none" stroke="#fff" stroke-width="1.4"/><path d="M9,15.5 H14 M11.5,12.5 V15.5" stroke="#fff" stroke-width="1.3"/></svg>
<svg style="position:absolute;left:1187px;top:997px" width="12" height="16"><path d="M1,5 H4 L9,1 V15 L4,11 H1 Z" fill="none" stroke="#fff" stroke-width="1.3"/><path d="M4,5 L9,1 V15 L4,11 Z" fill="#fff"/></svg>
<span class="t" style="left:1210.8px;top:991.77px;font-size:11.5px;color:#fff;text-align:center;width:60px;">12:25</span>
<span class="t" style="left:1200.3px;top:1007.77px;font-size:11.5px;color:#fff;letter-spacing:-0.4px;text-align:center;width:80px;">12.8.2015</span>
<div style="left:384px;top:26px;width:800px;height:600px;background:#6a98c4;border:1px solid #4d79a5;box-sizing:border-box"></div>
<svg style="position:absolute;left:394px;top:33px" width="16" height="16" viewBox="0 0 16 16">
<circle cx="8" cy="7.8" r="7.2" fill="#fafafa" stroke="#5a5a5a" stroke-width="1.1"/>
<path d="M3.5,10.5 V7 Q3.5,3.8 7,3.5 H10 Q12,3.6 12.3,5.3" fill="none" stroke="#90a090" stroke-width="1"/>
<path d="M12.8,6.5 V10.5 L11.8,11.2" fill="none" stroke="#f07a20" stroke-width="1"/>
<path d="M4,3.1 L5.5,2.4 L10.9,9.4 L8.9,11 Z" fill="#d40000"/></svg>
<span class="t" style="left:683.7px;top:34.47px;font-size:14.8px;color:#1a1a1a;text-align:center;width:200px;">Resource Monitor</span>
<div style="left:1088px;top:39px;width:9px;height:2px;background:#111"></div>
<div style="left:1114px;top:33px;width:11px;height:9px;border:1px solid #111;border-top-width:2px;box-sizing:border-box"></div>
<div style="left:1132px;top:27px;width:45px;height:20px;background:#c75050"></div>
<svg style="position:absolute;left:1150px;top:32px" width="11" height="11"><path d="M1.5,1.5 L9.5,9.5 M9.5,1.5 L1.5,9.5" stroke="#fff" stroke-width="1.8"/></svg>
<div style="left:391px;top:56px;width:786px;height:563px;background:#5a88b3"></div>
<div style="left:392px;top:57px;width:784px;height:561px;background:#f0f0f0"></div>
<div style="left:392px;top:57px;width:784px;height:18px;background:#f5f6f7"></div>
<div style="left:392px;top:75px;width:784px;height:1px;background:#e8e9ea"></div>
<span class="t" style="left:399.5px;top:60.84px;font-size:12px;color:#000;">File</span>
<span class="t" style="left:431.5px;top:60.84px;font-size:12px;color:#000;letter-spacing:0.25px;">Monitor</span>
<span class="t" style="left:487.5px;top:60.84px;font-size:12px;color:#000;">Help</span>
<div style="left:395px;top:81px;width:61px;height:21px;background:linear-gradient(#f0f0f0,#e4e4e4);border:1px solid #acacac;border-bottom:none;box-sizing:border-box"></div>
<div style="left:456px;top:81px;width:48px;height:21px;background:linear-gradient(#f0f0f0,#e4e4e4);border:1px solid #acacac;border-bottom:none;box-sizing:border-box"></div>
<div style="left:504px;top:81px;width:55px;height:21px;background:linear-gradient(#f0f0f0,#e4e4e4);border:1px solid #acacac;border-bottom:none;box-sizing:border-box"></div>
<div style="left:611px;top:81px;width:53px;height:21px;background:linear-gradient(#f0f0f0,#e4e4e4);border:1px solid #acacac;border-bottom:none;box-sizing:border-box"></div>
<span class="t" style="left:401.5px;top:86.34px;font-size:12px;color:#000;letter-spacing:-0.15px;">Overview</span>
<span class="t" style="left:462px;top:86.34px;font-size:12px;color:#000;">CPU</span>
<span class="t" style="left:510px;top:86.34px;font-size:12px;color:#000;letter-spacing:-0.2px;">Memory</span>
<span class="t" style="left:615.5px;top:86.34px;font-size:12px;color:#000;">Network</span>
<div style="left:393px;top:101px;width:780px;height:5px;background:#fff;border:1px solid #acacac;box-sizing:border-box"></div>
<div style="left:559px;top:79px;width:52px;height:24px;background:#fff;border:1px solid #acacac;border-bottom:none;box-sizing:border-box"></div>
<span class="t" style="left:567px;top:83.84px;font-size:12px;color:#000;">Disk</span>
<div style="left:393px;top:107px;width:542px;height:511px;background:#fff"></div>
<div style="left:393px;top:109px;width:541px;height:30px;background:linear-gradient(#fdfdfd 0%,#e9e9e9 35%,#c4c4c4 75%,#acacac 100%);border:1px solid #6e6e6e;border-bottom-color:#8a8a8a;box-sizing:border-box"></div>
<span class="t" style="left:400px;top:118.00px;font-size:13px;color:#111;">Processes with Disk Activity</span>
<svg style="position:absolute;left:904.0px;top:114.0px" width="19" height="19"><defs><linearGradient id="cg913.5123.5" x1="0" y1="0" x2="0" y2="1"><stop offset="0" stop-color="#f4f4f4"/><stop offset="1" stop-color="#d6d6d6"/></linearGradient></defs>
<circle cx="9.5" cy="9.5" r="8.8" fill="url(#cg913.5123.5)" stroke="#9a9a9a" stroke-width="1"/>
<path d="M5,10.5 L9.5,6.5 L14,10.5" fill="none" stroke="#222" stroke-width="2.2"/></svg>
<div style="left:393px;top:138px;width:541px;height:187px;background:#fff;border:1px solid #6e6e6e;border-top:none;box-sizing:border-box"></div>
<div style="left:394px;top:139px;width:522px;height:23px;background:#fcfcfc"></div>
<div style="left:394px;top:162px;width:522px;height:1px;background:#e3edf8"></div>
<div style="left:573px;top:139px;width:1px;height:185px;background:#e6eef8"></div>
<div style="left:623px;top:139px;width:1px;height:185px;background:#e6eef8"></div>
<div style="left:721px;top:139px;width:1px;height:185px;background:#e6eef8"></div>
<div style="left:818px;top:139px;width:1px;height:185px;background:#e6eef8"></div>
<div style="left:916px;top:139px;width:1px;height:185px;background:#e6eef8"></div>
<div style="left:398px;top:144px;width:13px;height:13px;background:#fff;border:1px solid #707070;box-sizing:border-box"></div>
<span class="t" style="left:417.5px;top:145.69px;font-size:11px;color:#000;letter-spacing:0.1px;">Image</span>
<span class="t" style="left:580px;top:145.69px;font-size:11px;color:#000;">PID</span>
<span class="t" style="left:515.5px;top:145.69px;font-size:11px;color:#000;letter-spacing:-0.3px;text-align:right;width:200px;">Read (B/sec)</span>
<span class="t" style="left:612.5px;top:145.69px;font-size:11px;color:#000;letter-spacing:-0.3px;text-align:right;width:200px;">Write (B/sec)</span>
<span class="t" style="left:709.5px;top:145.69px;font-size:11px;color:#000;letter-spacing:-0.15px;text-align:right;width:200px;">Total (B/sec)</span>
<svg style="position:absolute;left:670px;top:140px" width="11" height="5"><path d="M0,0 H10 L5,4.5 Z" fill="#8cc0e8"/></svg>
<div style="left:394px;top:163px;width:522px;height:161px;overflow:hidden">
<div style="left:4px;top:2px;width:13px;height:13px;background:#fff;border:1px solid #707070;box-sizing:border-box"></div>
<span class="t" style="left:22px;top:3.69px;font-size:11px;color:#000;">System</span>
<span class="t" style="left:186px;top:3.69px;font-size:11px;color:#000;letter-spacing:-0.2px;">4</span>
<span class="t" style="left:119.5px;top:3.69px;font-size:11px;color:#000;letter-spacing:-0.1px;text-align:right;width:200px;">845 972</span>
<span class="t" style="left:216.5px;top:3.69px;font-size:11px;color:#000;letter-spacing:-0.1px;text-align:right;width:200px;">3 930 063</span>
<span class="t" style="left:314px;top:3.69px;font-size:11px;color:#000;letter-spacing:-0.1px;text-align:right;width:200px;">4 776 035</span>
<div style="left:4px;top:19px;width:13px;height:13px;background:#fff;border:1px solid #707070;box-sizing:border-box"></div>
<span class="t" style="left:22px;top:20.69px;font-size:11px;color:#000;">MsMpEng.exe</span>
<span class="t" style="left:186px;top:20.69px;font-size:11px;color:#000;letter-spacing:-0.2px;">1532</span>
<span class="t" style="left:119.5px;top:20.69px;font-size:11px;color:#000;letter-spacing:-0.1px;text-align:right;width:200px;">763 341</span>
<span class="t" style="left:216.5px;top:20.69px;font-size:11px;color:#000;letter-spacing:-0.1px;text-align:right;width:200px;">1 638</span>
<span class="t" style="left:314px;top:20.69px;font-size:11px;color:#000;letter-spacing:-0.1px;text-align:right;width:200px;">764 979</span>
<div style="left:4px;top:36px;width:13px;height:13px;background:#fff;border:1px solid #707070;box-sizing:border-box"></div>
<span class="t" style="left:22px;top:37.69px;font-size:11px;color:#000;">svchost.exe (netsvcs)</span>
<span class="t" style="left:186px;top:37.69px;font-size:11px;color:#000;letter-spacing:-0.2px;">2584</span>
<span class="t" style="left:119.5px;top:37.69px;font-size:11px;color:#000;letter-spacing:-0.1px;text-align:right;width:200px;">128 904</span>
<span class="t" style="left:216.5px;top:37.69px;font-size:11px;color:#000;letter-spacing:-0.1px;text-align:right;width:200px;">159 797</span>
<span class="t" style="left:314px;top:37.69px;font-size:11px;color:#000;letter-spacing:-0.1px;text-align:right;width:200px;">288 701</span>
<div style="left:4px;top:53px;width:13px;height:13px;background:#fff;border:1px solid #707070;box-sizing:border-box"></div>
<span class="t" style="left:22px;top:54.69px;font-size:11px;color:#000;">SearchProtocolHost.exe</span>
<span class="t" style="left:186px;top:54.69px;font-size:11px;color:#000;letter-spacing:-0.2px;">1368</span>
<span class="t" style="left:119.5px;top:54.69px;font-size:11px;color:#000;letter-spacing:-0.1px;text-align:right;width:200px;">59 122</span>
<span class="t" style="left:216.5px;top:54.69px;font-size:11px;color:#000;letter-spacing:-0.1px;text-align:right;width:200px;">0</span>
<span class="t" style="left:314px;top:54.69px;font-size:11px;color:#000;letter-spacing:-0.1px;text-align:right;width:200px;">59 122</span>
<div style="left:4px;top:70px;width:13px;height:13px;background:#fff;border:1px solid #707070;box-sizing:border-box"></div>
<span class="t" style="left:22px;top:71.69px;font-size:11px;color:#000;">SearchFilterHost.exe</span>
<span class="t" style="left:186px;top:71.69px;font-size:11px;color:#000;letter-spacing:-0.2px;">2468</span>
<span class="t" style="left:119.5px;top:71.69px;font-size:11px;color:#000;letter-spacing:-0.1px;text-align:right;width:200px;">27 278</span>
<span class="t" style="left:216.5px;top:71.69px;font-size:11px;color:#000;letter-spacing:-0.1px;text-align:right;width:200px;">349</span>
<span class="t" style="left:314px;top:71.69px;font-size:11px;color:#000;letter-spacing:-0.1px;text-align:right;width:200px;">27 626</span>
<div style="left:4px;top:87px;width:13px;height:13px;background:#fff;border:1px solid #707070;box-sizing:border-box"></div>
<span class="t" style="left:22px;top:88.69px;font-size:11px;color:#000;">taskhost.exe</span>
<span class="t" style="left:186px;top:88.69px;font-size:11px;color:#000;letter-spacing:-0.2px;">1712</span>
<span class="t" style="left:119.5px;top:88.69px;font-size:11px;color:#000;letter-spacing:-0.1px;text-align:right;width:200px;">8 169</span>
<span class="t" style="left:216.5px;top:88.69px;font-size:11px;color:#000;letter-spacing:-0.1px;text-align:right;width:200px;">0</span>
<span class="t" style="left:314px;top:88.69px;font-size:11px;color:#000;letter-spacing:-0.1px;text-align:right;width:200px;">8 169</span>
<div style="left:4px;top:104px;width:13px;height:13px;background:#fff;border:1px solid #707070;box-sizing:border-box"></div>
<span class="t" style="left:22px;top:105.69px;font-size:11px;color:#000;">chrome.exe</span>
<span class="t" style="left:186px;top:105.69px;font-size:11px;color:#000;letter-spacing:-0.2px;">580</span>
<span class="t" style="left:119.5px;top:105.69px;font-size:11px;color:#000;letter-spacing:-0.1px;text-align:right;width:200px;">5 419</span>
<span class="t" style="left:216.5px;top:105.69px;font-size:11px;color:#000;letter-spacing:-0.1px;text-align:right;width:200px;">24 874</span>
<span class="t" style="left:314px;top:105.69px;font-size:11px;color:#000;letter-spacing:-0.1px;text-align:right;width:200px;">30 293</span>
<div style="left:4px;top:121px;width:13px;height:13px;background:#fff;border:1px solid #707070;box-sizing:border-box"></div>
<span class="t" style="left:22px;top:122.69px;font-size:11px;color:#000;">WmiPrvSE.exe</span>
<span class="t" style="left:186px;top:122.69px;font-size:11px;color:#000;letter-spacing:-0.2px;">3536</span>
<span class="t" style="left:119.5px;top:122.69px;font-size:11px;color:#000;letter-spacing:-0.1px;text-align:right;width:200px;">2 234</span>
<span class="t" style="left:216.5px;top:122.69px;font-size:11px;color:#000;letter-spacing:-0.1px;text-align:right;width:200px;">0</span>
<span class="t" style="left:314px;top:122.69px;font-size:11px;color:#000;letter-spacing:-0.1px;text-align:right;width:200px;">2 234</span>
<div style="left:4px;top:138px;width:13px;height:13px;background:#fff;border:1px solid #707070;box-sizing:border-box"></div>
<span class="t" style="left:22px;top:139.69px;font-size:11px;color:#000;">SearchIndexer.exe</span>
<span class="t" style="left:186px;top:139.69px;font-size:11px;color:#000;letter-spacing:-0.2px;">2716</span>
<span class="t" style="left:119.5px;top:139.69px;font-size:11px;color:#000;letter-spacing:-0.1px;text-align:right;width:200px;">956</span>
<span class="t" style="left:216.5px;top:139.69px;font-size:11px;color:#000;letter-spacing:-0.1px;text-align:right;width:200px;">26 662</span>
<span class="t" style="left:314px;top:139.69px;font-size:11px;color:#000;letter-spacing:-0.1px;text-align:right;width:200px;">27 618</span>
<div style="left:4px;top:155px;width:13px;height:13px;background:#fff;border:1px solid #707070;box-sizing:border-box"></div>
<span class="t" style="left:22px;top:156.69px;font-size:11px;color:#000;">TiWorker.exe</span>
<span class="t" style="left:186px;top:156.69px;font-size:11px;color:#000;letter-spacing:-0.2px;">1520</span>
<span class="t" style="left:119.5px;top:156.69px;font-size:11px;color:#000;letter-spacing:-0.1px;text-align:right;width:200px;">386</span>
<span class="t" style="left:216.5px;top:156.69px;font-size:11px;color:#000;letter-spacing:-0.1px;text-align:right;width:200px;">2 454</span>
<span class="t" style="left:314px;top:156.69px;font-size:11px;color:#000;letter-spacing:-0.1px;text-align:right;width:200px;">2 838</span>
</div>
<div style="left:916px;top:139px;width:17px;height:185px;background:#f0f0f0"></div>
<div style="left:917px;top:156px;width:15px;height:91px;background:#cdcdcd"></div>
<svg style="position:absolute;left:919.5px;top:144px" width="10" height="8"><path d="M1,6 L5,2 L9,6" fill="none" stroke="#606060" stroke-width="2"/></svg>
<svg style="position:absolute;left:919.5px;top:311px" width="10" height="8"><path d="M1,2 L5,6 L9,2" fill="none" stroke="#606060" stroke-width="2"/></svg>
<div style="left:393px;top:331px;width:541px;height:30px;background:linear-gradient(#fdfdfd 0%,#e9e9e9 35%,#c4c4c4 75%,#acacac 100%);border:1px solid #6e6e6e;border-bottom-color:#8a8a8a;box-sizing:border-box"></div>
<span class="t" style="left:400px;top:340.00px;font-size:13px;color:#111;">Disk Activity</span>
<svg style="position:absolute;left:545px;top:339px" width="12" height="14"><rect x="0.5" y="0.5" width="11" height="13" fill="#00e000" stroke="#e8e8e8"/><rect x="1" y="1" width="10" height="7.5" fill="#00a000"/>
<path d="M1,2.5 H11 M1,4.5 H11 M1,6.5 H11 M2.5,1 V8 M4.5,1 V8 M6.5,1 V8 M8.5,1 V8" stroke="#003000" stroke-width="0.9"/></svg>
<span class="t" style="left:562px;top:341.19px;font-size:11px;color:#000;letter-spacing:0.05px;">3 MB/sec Disk I/O</span>
<svg style="position:absolute;left:727px;top:339px" width="12" height="14"><rect x="0.5" y="0.5" width="11" height="13" fill="#0000c0" stroke="#e8e8e8"/>
<path d="M1,3 H11 M1,5 H11 M1,7 H11 M1,9 H11 M1,11 H11 M3,1 V13 M5,1 V13 M7,1 V13 M9,1 V13" stroke="#2020ff" stroke-width="0.6"/></svg>
<span class="t" style="left:743px;top:341.19px;font-size:11px;color:#000;letter-spacing:0.07px;">0% Highest Active Time</span>
<svg style="position:absolute;left:904.0px;top:336.0px" width="19" height="19"><defs><linearGradient id="cg913.5345.5" x1="0" y1="0" x2="0" y2="1"><stop offset="0" stop-color="#f4f4f4"/><stop offset="1" stop-color="#d6d6d6"/></linearGradient></defs>
<circle cx="9.5" cy="9.5" r="8.8" fill="url(#cg913.5345.5)" stroke="#9a9a9a" stroke-width="1"/>
<path d="M5,7.5 L9.5,11.5 L14,7.5" fill="none" stroke="#222" stroke-width="2.2"/></svg>
<div style="left:393px;top:367px;width:541px;height:30px;background:linear-gradient(#fdfdfd 0%,#e9e9e9 35%,#c4c4c4 75%,#acacac 100%);border:1px solid #6e6e6e;border-bottom-color:#8a8a8a;box-sizing:border-box"></div>
<span class="t" style="left:400px;top:376.00px;font-size:13px;color:#111;">Storage</span>
<svg style="position:absolute;left:904.0px;top:372.0px" width="19" height="19"><defs><linearGradient id="cg913.5381.5" x1="0" y1="0" x2="0" y2="1"><stop offset="0" stop-color="#f4f4f4"/><stop offset="1" stop-color="#d6d6d6"/></linearGradient></defs>
<circle cx="9.5" cy="9.5" r="8.8" fill="url(#cg913.5381.5)" stroke="#9a9a9a" stroke-width="1"/>
<path d="M5,7.5 L9.5,11.5 L14,7.5" fill="none" stroke="#222" stroke-width="2.2"/></svg>
<div style="left:936px;top:107px;width:15px;height:511px;background:#cdcdcd"></div>
<div style="left:936px;top:107px;width:15px;height:16px;background:#f0f0f0"></div>
<div style="left:936px;top:600px;width:15px;height:18px;background:#f0f0f0"></div>
<svg style="position:absolute;left:938.5px;top:112px" width="10" height="8"><path d="M1,6 L5,2 L9,6" fill="none" stroke="#555" stroke-width="2"/></svg>
<svg style="position:absolute;left:938.5px;top:605px" width="10" height="8"><path d="M1,2 L5,6 L9,2" fill="none" stroke="#555" stroke-width="2"/></svg>
<div style="left:952px;top:107px;width:1px;height:511px;background:#6a6a6a"></div>
<div style="left:953px;top:107px;width:207px;height:511px;background:#fff"></div>
<div style="left:958px;top:109px;width:200px;height:176px;background:#fff;border:1px solid #828282;box-sizing:border-box"></div>
<div style="left:958px;top:109px;width:200px;height:30px;background:linear-gradient(#fdfdfd 0%,#e9e9e9 35%,#c4c4c4 75%,#acacac 100%);border:1px solid #6e6e6e;border-bottom-color:#8a8a8a;box-sizing:border-box"></div>
<svg style="position:absolute;left:969.0px;top:114.0px" width="19" height="19"><defs><linearGradient id="cg978.5123.5" x1="0" y1="0" x2="0" y2="1"><stop offset="0" stop-color="#f4f4f4"/><stop offset="1" stop-color="#d6d6d6"/></linearGradient></defs>
<circle cx="9.5" cy="9.5" r="8.8" fill="url(#cg978.5123.5)" stroke="#9a9a9a" stroke-width="1"/>
<path d="M7.5,5 L11.5,9.5 L7.5,14" fill="none" stroke="#222" stroke-width="2.2"/></svg>
<div style="left:1059px;top:113px;width:85px;height:22px;background:linear-gradient(#f2f2f2,#e6e6e6);border:1px solid #c4c4c4;box-sizing:border-box"></div>
<span class="t" style="left:1062.5px;top:117.64px;font-size:12px;color:#000;text-align:center;width:60px;">Views</span>
<div style="left:1130px;top:115px;width:2px;height:18px;background:#777"></div>
<svg style="position:absolute;left:1132px;top:122px" width="10" height="6"><path d="M0.5,0.5 H9.5 L5,5.5 Z" fill="#000"/></svg>
<span class="t" style="left:971.5px;top:145.27px;font-size:11.5px;color:#000;">Disk</span>
<span class="t" style="left:936px;top:145.69px;font-size:11px;color:#000;letter-spacing:0.1px;text-align:right;width:200px;">10 MB/sec</span>
<span class="t" style="left:971.5px;top:266.69px;font-size:11px;color:#000;letter-spacing:-0.1px;">60 Seconds</span>
<span class="t" style="left:938px;top:266.69px;font-size:11px;color:#000;text-align:right;width:200px;">0</span>
<div style="left:1147px;top:150px;width:1px;height:124px;background:#000"></div>
<div style="left:1142px;top:150px;width:5px;height:1px;background:#000"></div>
<div style="left:1142px;top:273px;width:5px;height:1px;background:#000"></div>
<div style="left:969px;top:160px;width:171px;height:102px;background:#000;border-top:2px solid #7a7a7a;border-left:2px solid #7a7a7a;border-right:1px solid #e0e0e0;box-sizing:border-box"></div>
<svg style="position:absolute;left:971px;top:162px" width="168" height="100" viewBox="0 0 168 100">
<rect width="168" height="100" fill="#000"/>
<polygon points="0,100 0.0,88.0 3.3,74.0 4.9,80.0 6.5,94.0 9.7,92.0 12.3,94.0 15.5,99.4 18.1,90.0 21.3,87.3 24.4,87.8 26.5,80.4 30.2,72.5 31.8,82.5 33.4,97.3 33.9,83.6 34.5,57.2 36.6,16.0 37.6,26.6 38.7,45.6 39.2,73.0 40.5,45.6 41.8,26.6 42.6,17.1 43.4,43.5 45.0,59.3 46.6,69.9 48.2,78.3 49.5,26.6 50.8,-2.0 52.4,10.8 54.5,44.5 57.1,46.6 59.3,69.9 60.3,85.7 61.4,58.3 63.5,31.9 66.1,37.2 68.8,26.6 72.4,20.3 74.0,-3.0 81.1,-3.0 81.3,13.4 84.3,6.0 85.9,11.8 86.4,23.4 87.4,35.0 88.5,47.7 89.6,59.3 90.4,77.2 91.7,59.3 92.7,49.8 93.8,36.1 94.6,22.4 95.7,8.1 96.4,-3.0 114.3,-3.0 115.4,16.0 116.5,46.6 117.0,77.2 118.0,50.9 119.6,22.4 120.7,8.1 122.3,17.1 123.8,20.3 124.9,34.0 125.4,59.3 126.5,87.8 127.5,63.5 128.6,38.2 129.6,25.5 131.8,28.7 133.3,33.5 134.9,38.2 136.5,48.8 138.1,87.8 139.7,72.0 140.2,49.8 141.3,40.3 142.3,43.5 145.5,49.8 148.6,50.9 150.8,51.9 151.8,45.6 153.4,40.8 155.0,49.8 156.6,60.9 159.7,48.2 161.3,55.0 163.4,62.5 165.5,67.8 167.1,59.3 168.0,62.0 168,100" fill="#005c00"/>
<path d="M12.5,0 V100 M27.5,0 V100 M42.5,0 V100 M57.5,0 V100 M72.5,0 V100 M87.5,0 V100 M102.5,0 V100 M117.5,0 V100 M132.5,0 V100 M147.5,0 V100 M162.5,0 V100 M0,10.5 H168 M0,20.5 H168 M0,30.5 H168 M0,40.5 H168 M0,50.5 H168 M0,60.5 H168 M0,70.5 H168 M0,80.5 H168 M0,90.5 H168" stroke="#00a400" stroke-width="1" fill="none"/>
<polyline points="0.0,88.0 3.3,74.0 4.9,80.0 6.5,94.0 9.7,92.0 12.3,94.0 15.5,99.4 18.1,90.0 21.3,87.3 24.4,87.8 26.5,80.4 30.2,72.5 31.8,82.5 33.4,97.3 33.9,83.6 34.5,57.2 36.6,16.0 37.6,26.6 38.7,45.6 39.2,73.0 40.5,45.6 41.8,26.6 42.6,17.1 43.4,43.5 45.0,59.3 46.6,69.9 48.2,78.3 49.5,26.6 50.8,-2.0 52.4,10.8 54.5,44.5 57.1,46.6 59.3,69.9 60.3,85.7 61.4,58.3 63.5,31.9 66.1,37.2 68.8,26.6 72.4,20.3 74.0,-3.0 81.1,-3.0 81.3,13.4 84.3,6.0 85.9,11.8 86.4,23.4 87.4,35.0 88.5,47.7 89.6,59.3 90.4,77.2 91.7,59.3 92.7,49.8 93.8,36.1 94.6,22.4 95.7,8.1 96.4,-3.0 114.3,-3.0 115.4,16.0 116.5,46.6 117.0,77.2 118.0,50.9 119.6,22.4 120.7,8.1 122.3,17.1 123.8,20.3 124.9,34.0 125.4,59.3 126.5,87.8 127.5,63.5 128.6,38.2 129.6,25.5 131.8,28.7 133.3,33.5 134.9,38.2 136.5,48.8 138.1,87.8 139.7,72.0 140.2,49.8 141.3,40.3 142.3,43.5 145.5,49.8 148.6,50.9 150.8,51.9 151.8,45.6 153.4,40.8 155.0,49.8 156.6,60.9 159.7,48.2 161.3,55.0 163.4,62.5 165.5,67.8 167.1,59.3 168.0,62.0" fill="none" stroke="#00ff00" stroke-width="1"/>
</svg>
<div style="left:1160px;top:107px;width:16px;height:511px;background:#cdcdcd"></div>
<div style="left:1160px;top:107px;width:16px;height:16px;background:#f0f0f0"></div>
<div style="left:1160px;top:600px;width:16px;height:18px;background:#f0f0f0"></div>
<svg style="position:absolute;left:1162.5px;top:112px" width="10" height="8"><path d="M1,6 L5,2 L9,6" fill="none" stroke="#555" stroke-width="2"/></svg>
<svg style="position:absolute;left:1162.5px;top:605px" width="10" height="8"><path d="M1,2 L5,6 L9,2" fill="none" stroke="#555" stroke-width="2"/></svg>
</div></body></html>
